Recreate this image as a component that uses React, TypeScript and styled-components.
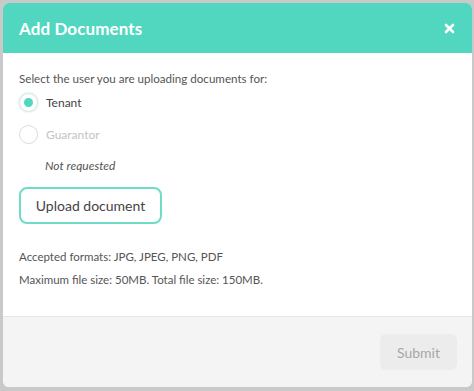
import styled, { createGlobalStyle } from 'styled-components';

const GlobalStyle = createGlobalStyle`
  html, body {
    margin: 0;
    padding: 0;
    background: #c9c9c9;
    font-family: Lato, "Open Sans", sans-serif;
  }
`;

const Radio = ({ label, checked, disabled }: { label: string; checked?: boolean; disabled?: boolean }) => (
  <RadioRow $disabled={disabled}>
    <RadioCircle $checked={checked}>{checked && <RadioDot />}</RadioCircle>
    <span>{label}</span>
  </RadioRow>
);

const App = () => {
  return (
    <>
      <GlobalStyle />
      <Backdrop>
        <Modal>
          <Header>
            <Title>Add Documents</Title>
            <Close>
              <svg width="11" height="11" viewBox="0 0 11 11">
                <path d="M2 2 L9 9 M9 2 L2 9" stroke="#fff" strokeWidth="2.6" strokeLinecap="round" />
              </svg>
            </Close>
          </Header>
          <Body>
            <Prompt>Select the user you are uploading documents for:</Prompt>
            <RadioGroup>
              <Radio label="Tenant" checked />
              <Radio label="Guarantor" disabled />
            </RadioGroup>
            <Note>Not requested</Note>
            <UploadButton>Upload document</UploadButton>
            <Info>
              <div>Accepted formats: JPG, JPEG, PNG, PDF</div>
              <div>Maximum file size: 50MB. Total file size: 150MB.</div>
            </Info>
          </Body>
          <Footer>
            <SubmitButton disabled>Submit</SubmitButton>
          </Footer>
        </Modal>
      </Backdrop>
    </>
  );
};
export default App;

const Backdrop = styled.div`
  width: 474px;
  height: 391px;
  padding: 3px 2px 4px 3px;
  box-sizing: border-box;
  display: flex;
`;

const Modal = styled.div`
  flex: 1;
  display: flex;
  flex-direction: column;
  background: #fff;
  border-radius: 6px;
  overflow: hidden;
`;

const Header = styled.div`
  height: 50px;
  background: #51d7bf;
  display: flex;
  align-items: center;
  justify-content: space-between;
  padding: 0 17px 0 16px;
  flex-shrink: 0;
`;

const Title = styled.div`
  color: #fff;
  font-size: 17px;
  font-weight: 700;
  letter-spacing: 0.1px;
`;

const Close = styled.div`
  display: flex;
  align-items: center;
`;

const Body = styled.div`
  flex: 1;
  padding: 17px 16px 0;
  display: flex;
  flex-direction: column;
  align-items: flex-start;
`;

const Prompt = styled.div`
  font-size: 11.6px;
  color: #555;
  line-height: 18px;
`;

const RadioGroup = styled.div`
  display: flex;
  flex-direction: column;
  gap: 13px;
  margin-top: 5px;
`;

const RadioRow = styled.label<{ $disabled?: boolean }>`
  display: flex;
  align-items: center;
  gap: 8px;
  font-size: 12px;
  color: ${({ $disabled }) => ($disabled ? '#c4c4c4' : '#444')};
  height: 19px;
`;

const RadioCircle = styled.span<{ $checked?: boolean }>`
  width: 17px;
  height: 17px;
  border-radius: 50%;
  border: 1px solid ${({ $checked }) => ($checked ? '#d6e8e4' : '#dcdcdc')};
  box-shadow: ${({ $checked }) => ($checked ? '0 0 2px 1px #e6f4f1' : 'none')};
  display: flex;
  align-items: center;
  justify-content: center;
  background: #fff;
`;

const RadioDot = styled.span`
  width: 9px;
  height: 9px;
  border-radius: 50%;
  background: #51d7bf;
`;

const Note = styled.div`
  font-size: 12px;
  font-style: italic;
  color: #555;
  margin: 14px 0 0 26px;
`;

const UploadButton = styled.button`
  margin-top: 14px;
  width: 143px;
  height: 37px;
  border: 2px solid #6fdcc8;
  border-radius: 8px;
  background: #fff;
  color: #444;
  font-family: inherit;
  font-size: 14px;
`;

const Info = styled.div`
  margin-top: 26px;
  font-size: 11.5px;
  color: #555;
  display: flex;
  flex-direction: column;
  gap: 10px;
`;

const Footer = styled.div`
  height: 70px;
  flex-shrink: 0;
  background: #f4f4f4;
  border-top: 1px solid #e6e6e6;
  display: flex;
  align-items: center;
  justify-content: flex-end;
  padding: 0 15px 0 0;
`;

const SubmitButton = styled.button`
  width: 77px;
  height: 36px;
  border: none;
  border-radius: 6px;
  background: #ececec;
  color: #a8a8a8;
  font-family: inherit;
  font-size: 14px;
`;
